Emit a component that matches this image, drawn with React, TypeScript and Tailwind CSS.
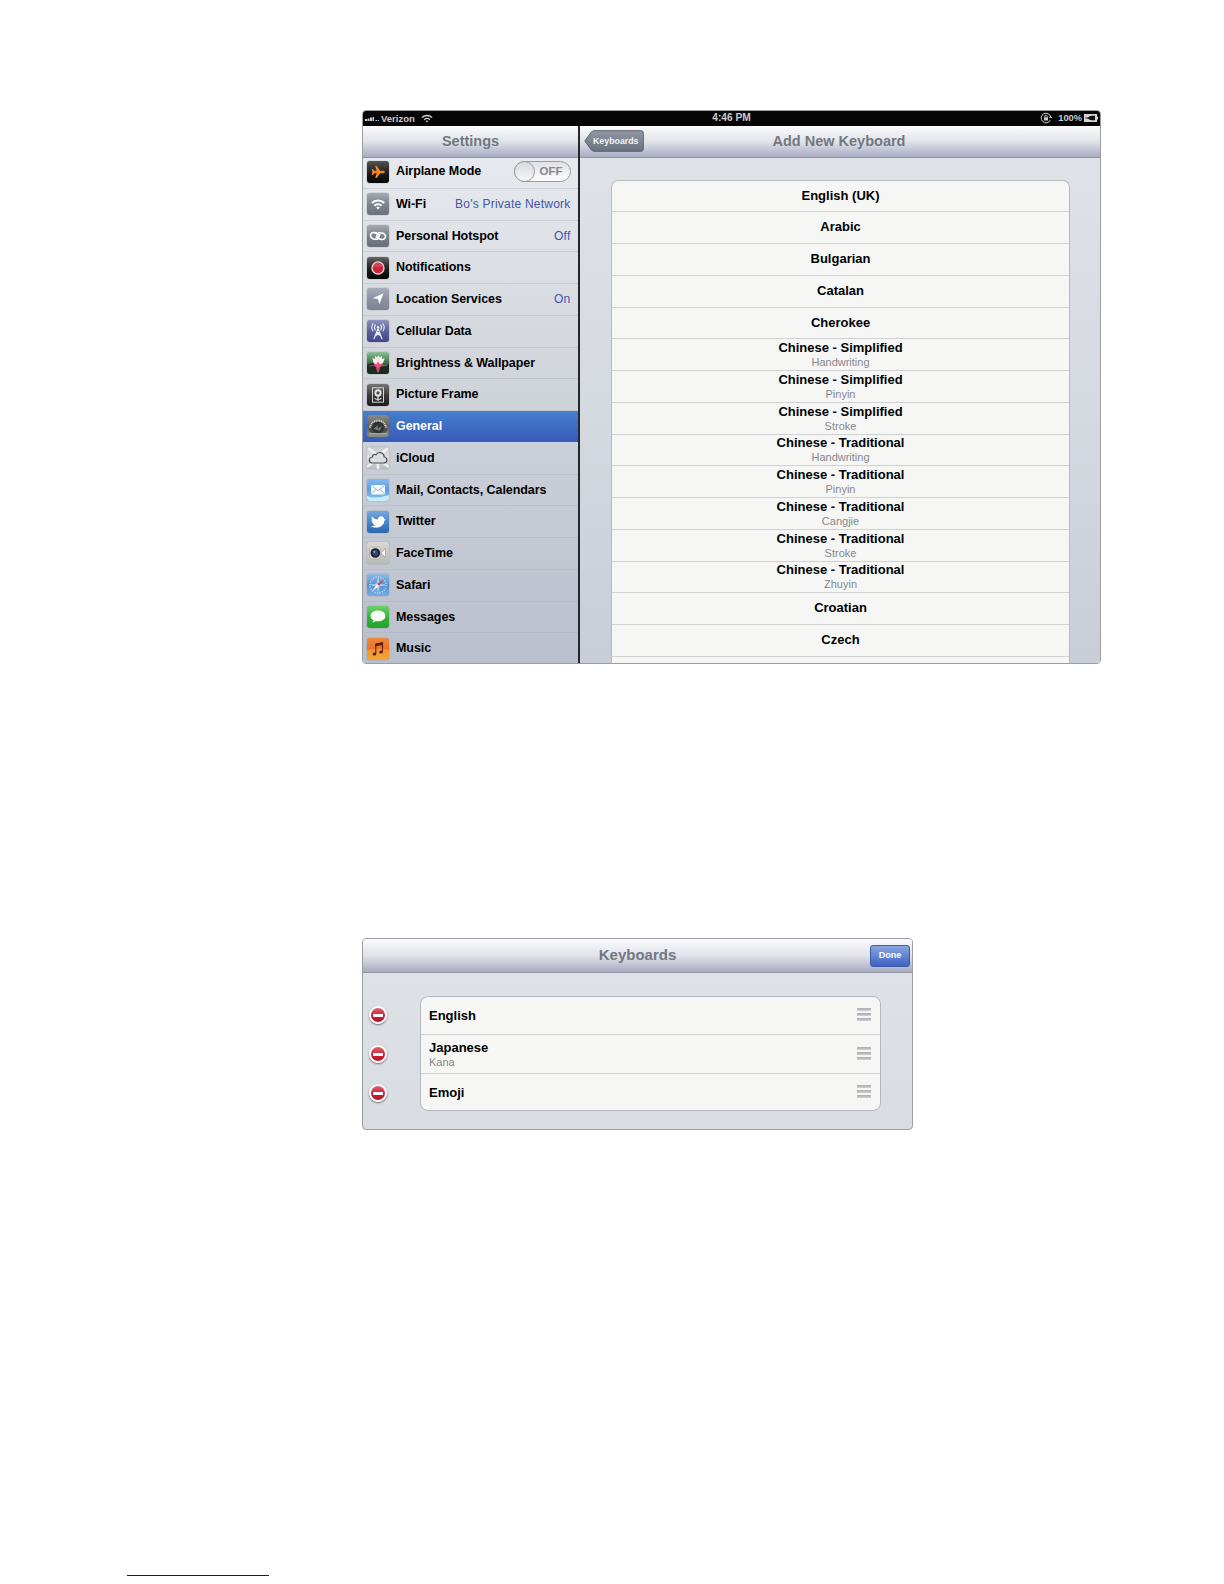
import type { ReactNode } from 'react'

type Setting = {
  label: string
  icon: ReactNode
  tile: string
  value?: string
}

const settings: Setting[] = [
  { label: 'Airplane Mode', icon: <PlaneIcon />, tile: 'from-[#555] via-[#222] to-[#050505]' },
  { label: 'Wi-Fi', icon: <WifiIcon />, tile: 'from-[#a4a9b1] via-[#80868f] to-[#6a717b]', value: "Bo's Private Network" },
  { label: 'Personal Hotspot', icon: <LinkIcon />, tile: 'from-[#a4a9b1] via-[#7b818a] to-[#686e78]', value: 'Off' },
  { label: 'Notifications', icon: <NotificationIcon />, tile: 'from-[#666] via-[#222] to-[#050505]' },
  { label: 'Location Services', icon: <LocationIcon />, tile: 'from-[#a9adb9] via-[#8c91a0] to-[#7e8493]', value: 'On' },
  { label: 'Cellular Data', icon: <TowerIcon />, tile: 'from-[#8d92bd] via-[#5b609a] to-[#41468a]' },
  { label: 'Brightness & Wallpaper', icon: <LotusIcon />, tile: 'from-[#8cc296] via-[#3f6b49] to-[#1a241d]' },
  { label: 'Picture Frame', icon: <FrameIcon />, tile: 'from-[#777] via-[#3c3c3c] to-[#1b1b1b]' },
  { label: 'General', icon: <GaugeIcon />, tile: 'from-[#888b87] via-[#60635f] to-[#8b8d87]' },
  { label: 'iCloud', icon: <CloudIcon />, tile: 'from-[#c9cacd] via-[#e1e2e4] to-[#b9babd]' },
  { label: 'Mail, Contacts, Calendars', icon: <MailIcon />, tile: 'from-[#86b9ec] via-[#5d9ce0] to-[#8fd0f4]' },
  { label: 'Twitter', icon: <BirdIcon />, tile: 'from-[#73a8dd] via-[#4687ca] to-[#2c68ae]' },
  { label: 'FaceTime', icon: <CameraIcon />, tile: 'from-[#d9dad7] via-[#c8c9c5] to-[#b9bab5]' },
  { label: 'Safari', icon: <CompassIcon />, tile: 'from-[#8fbbe6] via-[#5592d2] to-[#75aee0]' },
  { label: 'Messages', icon: <BubbleIcon />, tile: 'from-[#6fd06c] via-[#35b239] to-[#23a12b]' },
  { label: 'Music', icon: <MusicIcon />, tile: 'from-[#ee8a3a] via-[#ee6f26] to-[#f0932f]' },
]

const languages: { name: string; method?: string }[] = [
  { name: 'English (UK)' },
  { name: 'Arabic' },
  { name: 'Bulgarian' },
  { name: 'Catalan' },
  { name: 'Cherokee' },
  { name: 'Chinese - Simplified', method: 'Handwriting' },
  { name: 'Chinese - Simplified', method: 'Pinyin' },
  { name: 'Chinese - Simplified', method: 'Stroke' },
  { name: 'Chinese - Traditional', method: 'Handwriting' },
  { name: 'Chinese - Traditional', method: 'Pinyin' },
  { name: 'Chinese - Traditional', method: 'Cangjie' },
  { name: 'Chinese - Traditional', method: 'Stroke' },
  { name: 'Chinese - Traditional', method: 'Zhuyin' },
  { name: 'Croatian' },
  { name: 'Czech' },
]

function PlaneIcon() {
  return (
    <svg viewBox="0 0 22 22" className="size-full">
      <path d="M17.8 11c0-.8-.9-1.300-2-1.300h-2.600L9.800 5H8.300l1.300 4.700H7.200L6 8.100H4.700l.7 2.900-.7 2.900H6l1.200-1.600h2.400L8.300 17h1.500l3.400-4.700h2.600c1.100 0 2-.5 2-1.300Z" fill="#f5851f" />
    </svg>
  )
}

function WifiIcon() {
  return (
    <svg viewBox="0 0 22 22" className="size-full" fill="none" stroke="#fff" strokeWidth="2">
      <path d="M4.800 10a8.800 8.800 0 0 1 12.400 0M7.400 12.800a5 5 0 0 1 7.200 0" />
      <path d="M9.200 14.500a2.700 2.700 0 0 1 3.600 0L11 16.500Z" fill="#fff" stroke="none" />
    </svg>
  )
}

function LinkIcon() {
  return (
    <svg viewBox="0 0 22 22" className="size-full" fill="none" stroke="#fff" strokeWidth="1.600" strokeLinecap="round">
      <path d="M10.500 14c-2.500.8-7-.5-7-3.600 0-2 1.900-3.100 4-2.800 2.800.4 5 1.900 4.600 4-.2 1-1.700 1.300-2.900.4" />
      <path d="M11.500 8c2.500-.8 7 .5 7 3.600 0 2-1.900 3.100-4 2.800-2.800-.4-5-1.900-4.600-4 .2-1 1.700-1.300 2.900-.4" />
    </svg>
  )
}

function NotificationIcon() {
  return (
    <svg viewBox="0 0 22 22" className="size-full">
      <circle cx="11" cy="11" r="6" fill="#cf2336" stroke="#efd6d6" strokeWidth="1.400" />
      <path d="M6 10a5 5 0 0 1 10 0Z" fill="#e45e6b" opacity=".5" />
    </svg>
  )
}

function LocationIcon() {
  return (
    <svg viewBox="0 0 22 22" className="size-full">
      <path d="M16.500 5.200 12.300 16.200 11 11l-5.300-.8Z" fill="#fff" />
    </svg>
  )
}

function TowerIcon() {
  return (
    <svg viewBox="0 0 22 22" className="size-full" fill="none" stroke="#e8eaf6" strokeWidth="1.100" strokeLinecap="round">
      <path d="M11 8.500 7 18.800M11 8.500l4 10.300M9.500 12.500h3M12.700 12.700l-4.500 3.300M9.300 12.700l4.500 3.300" />
      <path d="M8.300 4.800a4.200 4.200 0 0 0 0 5M13.700 4.800a4.200 4.200 0 0 1 0 5M6 3.800a6.500 6.500 0 0 0 0 7.200M16 3.800a6.500 6.500 0 0 1 0 7.200" />
      <circle cx="11" cy="7.200" r="1.200" fill="#e8eaf6" stroke="none" />
    </svg>
  )
}

function LotusIcon() {
  return (
    <svg viewBox="0 0 22 22" className="size-full">
      <path d="M0 13q6-4 11 0t11-1v7q0 3-3 3H3q-3 0-3-3Z" fill="#1c2a20" />
      <path d="M11 14.500C7 13.500 5.600 9 5.500 5.800L7.700 7l.6-3.200L10 5.400l1.200-2.100L13 5.400l1.800-1.600.4 3.200 2.300-.9c-.2 4-2.600 7.400-6.500 8.400Z" fill="#f7e9ea" />
      <path d="M11 16.500c-2.800-1.100-4-3.200-4.500-5.500l2.800 1.300L11 9.500l1.900 2.800 3.100-1.300c-.7 2.300-2.200 4.400-5 5.500Z" fill="#e8517f" />
      <path d="m9 16 4 0-1.300 4.400h-1.400Z" fill="#cf4068" />
      <path d="M2 13.800h5M15 13.600h5" stroke="#bd5272" strokeWidth=".8" />
    </svg>
  )
}

function FrameIcon() {
  return (
    <svg viewBox="0 0 22 22" className="size-full" fill="none" stroke="#e4e4e4">
      <rect x="5.500" y="3.800" width="11" height="14.400" strokeWidth=".9" />
      <circle cx="11" cy="8.900" r="2.600" strokeWidth="2" />
      <path d="M11 12v5M11 15.500c-2.200 0-3-.3-3.300-1.300M11 15.500c2.200 0 3-.3 3.300-1.300" strokeWidth="1.200" />
    </svg>
  )
}

function GaugeIcon() {
  return (
    <svg viewBox="0 0 22 22" className="size-full">
      <path d="M1.500 15a9.600 9.600 0 0 1 19 0l-3 3h-13Z" fill="#4b4e4b" />
      <path d="M3 12.500a8.100 8.100 0 0 1 16 0" fill="none" stroke="#dedfdd" strokeWidth="2" strokeDasharray="1 .8" />
      <circle cx="11" cy="12.500" r="6" fill="#303331" />
      <path d="m6.500 14 4-4 .5 3.500 4.300-3-2.500 5.300Z" fill="#747875" />
      <path d="M2 18.800h18" stroke="#b5b7b2" strokeWidth="1" />
    </svg>
  )
}

function CloudIcon() {
  return (
    <svg viewBox="0 0 22 22" className="size-full">
      <path d="m1 1 8 6M21 1l-7 6M0 20l7-5M22 20l-7-5M11 16v6" stroke="#fff" strokeWidth="2.500" opacity=".7" />
      <path d="M5.500 16h11c4.300 0 4.600-5.700.7-6-.2-4.800-6.100-6-8.100-2.300C7 6.900 5.300 8.100 5.500 10 1 10.600 1.500 16 5.500 16Z" fill="#dcdde0" stroke="#4c4e54" strokeWidth="1.200" />
    </svg>
  )
}

function MailIcon() {
  return (
    <svg viewBox="0 0 22 22" className="size-full">
      <path d="M0 17q8 3.500 22-1v3q0 3-3 3H3q-3 0-3-3Z" fill="#c7ebfb" />
      <rect x="4" y="6" width="14" height="9.600" rx=".8" fill="#f6f9fc" />
      <path d="m4.500 6.500 6.500 5.200 6.500-5.200M4.500 15l4.300-4.500M17.500 15l-4.300-4.500" fill="none" stroke="#92a8bd" strokeWidth=".8" />
    </svg>
  )
}

function BirdIcon() {
  return (
    <svg viewBox="0 0 22 22" className="size-full">
      <path d="M18.700 8.200c-.5-.1-.9-.1-1.400.1-.3-2.800-3.700-4-5.700-1.900-.5.5-.7 1.300-.6 2.100-2.500 0-4.700-1.200-6-3-.8 1.400-.4 3 .7 4-.5 0-.9-.1-1.200-.3.1 1.500 1 2.600 2.300 3-.4.100-.8.100-1.200 0 .4 1.100 1.400 1.800 2.600 2-1.300.9-2.900 1.300-4.400 1.100 5.500 3.300 13.300.7 13.500-5.500.6-.4 1.100-.9 1.400-1.600Z" fill="#fff" />
    </svg>
  )
}

function CameraIcon() {
  return (
    <svg viewBox="0 0 22 22" className="size-full">
      <rect x="2.500" y="5" width="11" height="12" rx="2" fill="#d9dad6" stroke="#a8aaa4" strokeWidth=".6" />
      <circle cx="8.300" cy="11" r="4.800" fill="#1f2430" />
      <circle cx="8.300" cy="11" r="2.700" fill="#2c4a8b" />
      <circle cx="7.300" cy="9.800" r="1" fill="#9db4df" />
      <path d="M13.800 11 18.500 6.500v9Z" fill="#f4f4f2" stroke="#9b9d99" strokeWidth=".7" />
    </svg>
  )
}

function CompassIcon() {
  return (
    <svg viewBox="0 0 22 22" className="size-full">
      <circle cx="11" cy="11" r="8" fill="none" stroke="#c5dff5" strokeWidth="1.600" strokeDasharray="1 1.500" />
      <path d="m11 2 1.500 7.500L20 11l-7.500 1.500L11 20l-1.500-7.500L2 11l7.500-1.500Z" fill="#a9cdee" />
      <path d="M17.500 5 12 12l-2-2Z" fill="#d9474a" />
      <path d="m4.800 17.700 5.200-7.700 2 2Z" fill="#f4f7fa" />
    </svg>
  )
}

function BubbleIcon() {
  return (
    <svg viewBox="0 0 22 22" className="size-full">
      <path d="M11 4.500c4.300 0 7.400 2.300 7.400 5.400s-3.100 5.400-7.400 5.400c-.8 0-1.600-.1-2.300-.2-.9.900-2 1.400-3.400 1.500.7-.7 1-1.500 1.100-2.300-1.700-1-2.800-2.600-2.800-4.400 0-3.100 3.100-5.400 7.400-5.400Z" fill="#f5fbf5" />
    </svg>
  )
}

function MusicIcon() {
  return (
    <svg viewBox="0 0 22 22" className="size-full">
      <path d="M0 12q11-3 22 0v7q0 3-3 3H3q-3 0-3-3Z" fill="#f8bd3e" opacity=".45" />
      <path d="M8.800 6 15.500 4.800v8.700M8.800 6v9.500" fill="none" stroke="#5b2015" strokeWidth="1.100" />
      <path d="M8.300 5.700 16 4.300v2.600L8.300 8.300Z" fill="#5b2015" />
      <ellipse cx="7.400" cy="15.900" rx="1.900" ry="1.500" fill="#5b2015" />
      <ellipse cx="14.100" cy="14" rx="1.900" ry="1.500" fill="#5b2015" />
    </svg>
  )
}

function StatusBar() {
  return (
    <div className="grid h-[14.500px] shrink-0 grid-cols-3 items-center bg-[#050505] text-[9.500px] leading-none font-bold text-[#c9cbcd]">
      <div className="flex items-center pl-[2px]">
        <svg viewBox="0 0 14 8" className="mr-[2px] h-2 w-[14px]" fill="#c9cbcd">
          <path d="M0 5h2v2H0zM2.500 4.500h2V7h-2zM5 3.500h2V7H5zM7.500 3h1.500v4H7.500zM10.500 6H12v1h-1.500zM13 6h1v1h-1z" />
        </svg>
        <span>Verizon</span>
        <svg viewBox="0 0 12 9" className="ml-[6px] h-[9px] w-3" fill="none" stroke="#c9cbcd" strokeWidth="1.400">
          <path d="M1 3.600a7 7 0 0 1 10 0M3.200 5.700a4 4 0 0 1 5.600 0" />
          <path d="M4.700 7.100a1.900 1.900 0 0 1 2.600 0L6 8.500Z" fill="#c9cbcd" stroke="none" />
        </svg>
      </div>
      <span className="text-center text-[10.200px]">4:46 PM</span>
      <div className="flex items-center justify-end pr-[2px]">
        <svg viewBox="0 0 12 12" className="mr-[6px] size-3" fill="none" stroke="#c9cbcd">
          <path d="M10.300 8.200a4.800 4.800 0 1 1 .4-3.200M9.300 5.600h2.700" />
          <path d="M4 5.300h4v3.200H4Z" fill="#c9cbcd" stroke="none" />
          <path d="M4.800 5.500V4.300a1.200 1.200 0 0 1 2.400 0v1.200" strokeWidth=".9" />
        </svg>
        <span className="text-[9.300px]">100%</span>
        <svg viewBox="0 0 14 8" className="ml-[2px] h-2 w-[14px]">
          <path d="M0 0h13v2.500h1v3h-1V8H0Z" fill="#d2d4d6" />
          <path d="M1.500 3.500h2.500q1.500-1.800 3.500-1.800h3.500v4.600H7.500Q5.500 6.300 4 4.500H1.500Z" fill="#111" />
        </svg>
      </div>
    </div>
  )
}

function Toggle() {
  return (
    <div className="flex h-[21px] w-[57px] items-center rounded-full border border-[#999ca3] bg-gradient-to-b from-[#dfe1e4] to-[#fdfdfd]">
      <span className="-ml-px size-[21px] rounded-full border border-[#999ca3] bg-gradient-to-b from-[#d7d8dc] to-[#f7f7f8]" />
      <span className="ml-[5px] text-[11.500px] leading-none font-bold text-[#85878c]">OFF</span>
    </div>
  )
}

function SettingRow({ item }: { item: Setting }) {
  const active = item.label === 'General'
  const first = item.label === 'Airplane Mode'
  return (
    <li
      className={`flex shrink-0 items-center border-b pr-[7.500px] pl-[4px] ${first ? 'h-[31.300px] pb-[2px]' : 'h-[31.750px]'} ${
        active ? 'border-[#c9d5ea] bg-gradient-to-b from-[#457fcd] to-[#385ab8] text-white' : 'border-[#a9aeb8]/40 text-black'
      }`}
    >
      <span className={`size-[22px] shrink-0 overflow-hidden rounded-[3px] bg-gradient-to-b shadow-[0_0_1px_#555] ${item.tile}`}>{item.icon}</span>
      <span className="ml-[7px] flex-1 text-[12.500px] leading-none font-bold tracking-[-0.070px] whitespace-nowrap">{item.label}</span>
      {first && <Toggle />}
      {item.value && <span className="text-[12px] leading-none tracking-[0.220px] whitespace-nowrap text-[#4356a8]">{item.value}</span>}
    </li>
  )
}

function RemoveButton() {
  return (
    <span className="flex size-[18px] items-center justify-center rounded-full border-2 border-white bg-gradient-to-b from-[#e0627a] via-[#c71f35] to-[#bd1426] shadow-[0_1px_2px_#666]">
      <span className="h-[3px] w-[10px] bg-white" />
    </span>
  )
}

function Grip() {
  return (
    <span className="mb-[2px] flex w-[14px] flex-col gap-[2px]">
      <span className="h-[3px] bg-gradient-to-b from-[#a9abae] to-[#cfd0d2]" />
      <span className="h-[3px] bg-gradient-to-b from-[#a9abae] to-[#cfd0d2]" />
      <span className="h-[3px] bg-gradient-to-b from-[#a9abae] to-[#cfd0d2]" />
    </span>
  )
}

function KeyboardRow({ name, method, className }: { name: string; method?: string; className: string }) {
  return (
    <li className={`flex items-center justify-between pr-[9px] pl-2 ${className}`}>
      <div>
        <div className="text-[13px] leading-[15px] font-bold text-black">{name}</div>
        {method && <div className="text-[11px] leading-[14px] text-[#85878a]">{method}</div>}
      </div>
      <Grip />
    </li>
  )
}

export default function App() {
  return (
    <main className="flex h-[1584px] w-[1224px] flex-col overflow-hidden bg-white pt-[110px] font-['Liberation_Sans',Arial,sans-serif]">
      <section className="ml-[362px] flex h-[554px] w-[739px] flex-col overflow-hidden rounded-[4px] border border-[#9b9da1]">
        <StatusBar />
        <div className="flex min-h-0 flex-1">
          <aside className="flex w-[215px] shrink-0 flex-col">
            <h2 className="flex h-[32px] shrink-0 items-center justify-center border-b border-[#8f93a5] bg-gradient-to-b from-[#fbfcfd] via-[#e1e3ea] to-[#a9abc2] pt-px text-[14.500px] font-bold text-[#71787f]">Settings</h2>
            <ul className="flex min-h-0 flex-1 flex-col overflow-hidden bg-gradient-to-b from-[#e6e9ed] via-[#ced2d9] to-[#b9bfcc]">
              {settings.map((item) => (
                <SettingRow key={item.label} item={item} />
              ))}
            </ul>
          </aside>
          <div className="flex min-w-0 flex-1 flex-col border-l-2 border-[#26272c]">
            <header className="grid h-[32px] shrink-0 grid-cols-[62px_1fr_68px] items-center border-b border-[#8f93a5] bg-gradient-to-b from-[#fbfcfd] via-[#e1e3ea] to-[#a9abc2] pl-[4px]">
              <div className="relative h-[22px] w-[60px]">
                <svg viewBox="0 0 60 22" className="absolute inset-0 size-full">
                  <defs>
                    <linearGradient id="back" x1="0" y1="0" x2="0" y2="1">
                      <stop offset="0" stopColor="#9297a2" />
                      <stop offset="1" stopColor="#6a717e" />
                    </linearGradient>
                  </defs>
                  <path d="M.8 11 7 2.500Q8.200.700 10 .700h47q2.300 0 2.300 2.300v16q0 2.300-2.300 2.300H10q-1.800 0-3-1.800Z" fill="url(#back)" stroke="#5c626e" strokeWidth="1" />
                </svg>
                <span className="relative flex h-full items-center pl-[9px] text-[8.800px] leading-none font-bold text-[#f2f3f5]">Keyboards</span>
              </div>
              <h2 className="pt-px text-center text-[14.500px] font-bold text-[#71787f]">Add New Keyboard</h2>
            </header>
            <div className="min-h-0 flex-1 overflow-hidden bg-gradient-to-b from-[#dfe3e7] via-[#d5d9e0] to-[#c9cdd6] pt-[22px] pr-[30px] pl-[31px]">
              <ul className="rounded-t-[7px] border border-b-0 border-[#b7babf] bg-[#f6f7f5]">
                {languages.map((item) => (
                  <li
                    key={`${item.name}${item.method ?? ''}`}
                    className={`flex h-[31.750px] flex-col items-center justify-center border-b border-[#cfd1d3] ${item.method ? '' : 'pb-[1.500px]'}`}
                  >
                    <span className="text-[13px] leading-[15px] font-bold text-black">{item.name}</span>
                    {item.method && <span className="text-[11px] leading-[14px] text-[#85878a]">{item.method}</span>}
                  </li>
                ))}
                <li className="h-8" />
              </ul>
            </div>
          </div>
        </div>
      </section>

      <section className="mt-[274px] ml-[362px] flex h-[192px] w-[551px] flex-col overflow-hidden rounded-[4px] border border-[#9b9da1] bg-gradient-to-b from-[#dfe3e7] to-[#d9dce1]">
        <header className="grid h-[34px] shrink-0 grid-cols-[60px_1fr_60px] items-center border-b border-[#8f93a5] bg-gradient-to-b from-[#fbfcfd] via-[#e1e3ea] to-[#a9abc2]">
          <h2 className="col-start-2 text-center text-[15px] font-bold text-[#71787f]">Keyboards</h2>
          <button className="mr-[2px] flex h-[22px] w-[40px] items-center justify-center justify-self-end rounded-[3px] border border-[#3d5ba5] bg-gradient-to-b from-[#88a6e0] to-[#3f62c4] text-[9px] font-bold text-white">Done</button>
        </header>
        <div className="flex pt-[23px]">
          <div className="flex w-[57px] flex-col items-start gap-[21px] pt-[10px] pl-[6px]">
            <RemoveButton />
            <RemoveButton />
            <RemoveButton />
          </div>
          <ul className="h-[115px] w-[461px] rounded-[8px] border border-[#b4b7bd] bg-[#f6f7f5]">
            <KeyboardRow name="English" className="h-[38px] border-b border-[#cfd1d3]" />
            <KeyboardRow name="Japanese" method="Kana" className="h-[39px] border-b border-[#cfd1d3]" />
            <KeyboardRow name="Emoji" className="h-[36px]" />
          </ul>
        </div>
      </section>

      <div className="mt-[445px] ml-[127px] h-px w-[142px] bg-[#12128c]" />
    </main>
  )
}
